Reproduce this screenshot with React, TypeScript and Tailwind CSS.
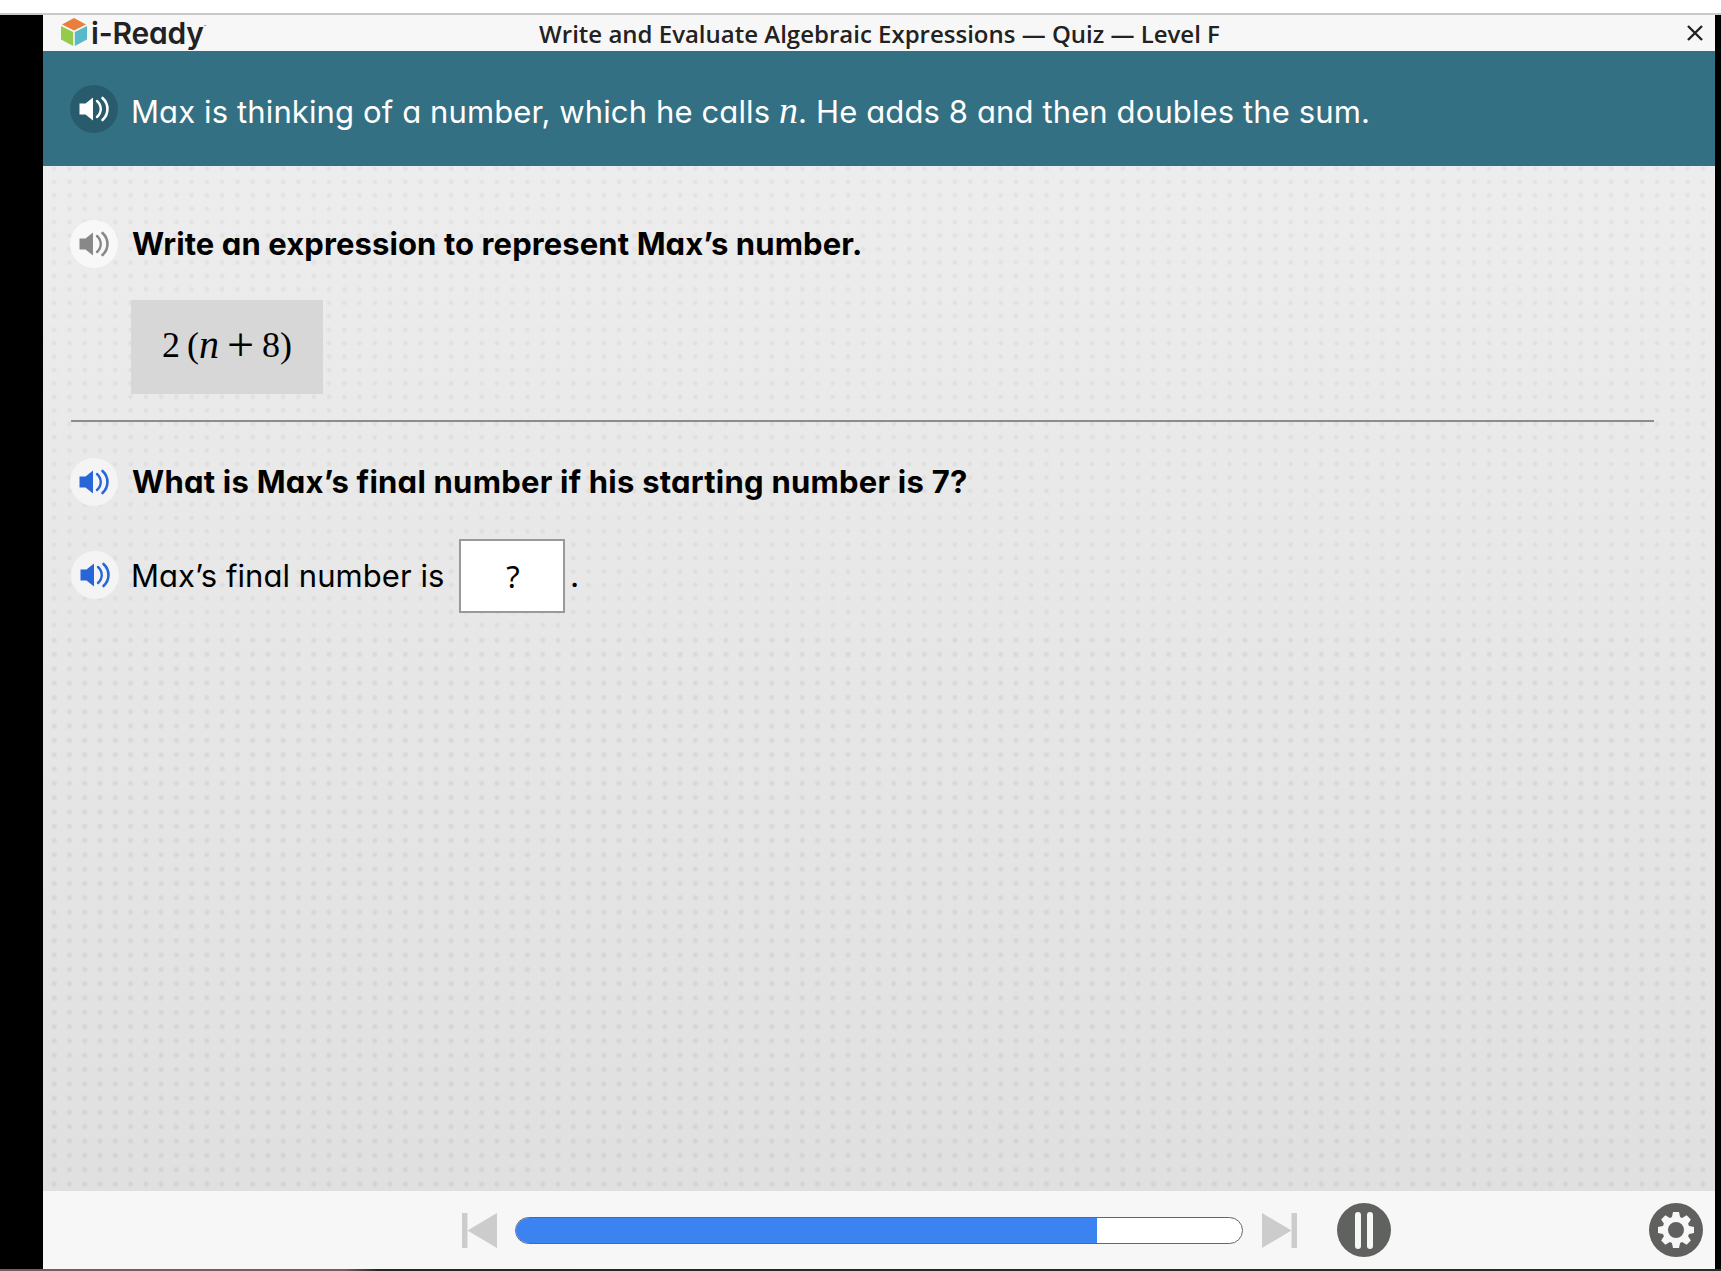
import React from "react"

const SpeakerIcon: React.FC<{ className?: string }> = ({ className }) => (
  <svg viewBox="-16 -13 32 26" className={`h-[26px] w-8 ${className}`} fill="none" strokeLinecap="round">
    <path d="M-14.500 -5.500H-8.500L-1 -11.500V11.500L-8.500 5.500H-14.500Z" fill="currentColor" />
    <path d="M3 -8c5 4.600 5 11.400 0 16" stroke="currentColor" strokeWidth="2.400" />
    <path d="M8.500 -11c6.600 6 6.600 16 0 22" stroke="currentColor" strokeWidth="2.600" />
  </svg>
)

const AudioButton: React.FC<{ className?: string }> = ({ className }) => (
  <button className={`flex size-12 shrink-0 items-center justify-center rounded-full ${className}`}>
    <SpeakerIcon className="shrink-0" />
  </button>
)

const Logo = () => (
  <div className="flex h-9 items-center">
    <svg viewBox="0 0 26 28" className="mb-[3px] h-7 w-[26px]">
      <path d="M13 0L25 6.500L13 12.500L1 6.500Z" fill="#e97e3d" />
      <path d="M0 8L12.200 14V28L0 21.500Z" fill="#95ca4d" />
      <path d="M26 8L13.800 14V28L26 21.500Z" fill="#58bac8" />
    </svg>
    <span className="mb-px ml-1 text-[30px] leading-9 font-semibold tracking-[-0.2px] text-[#222]">i-Ready</span>
    <span className="mb-3 text-[4px] text-[#222]">™</span>
  </div>
)

const SkipIcon: React.FC<{ className?: string }> = ({ className }) => (
  <svg viewBox="0 0 35 35" className={`size-[35px] ${className}`} fill="#ccc">
    <path d="M0 0h5.500v35H0z" />
    <path d="M5.500 17.500L35 0v35z" />
  </svg>
)

const GearIcon = () => (
  <svg viewBox="-18 -18 36 36" className="size-9" fill="#f7f7f7">
    {[0, 45, 90, 135, 180, 225, 270, 315].map((angle) => (
      <path key={angle} d="M-4.500 -11L-3 -18H3L4.500 -11Z" transform={`rotate(${angle})`} />
    ))}
    <circle r="10.800" fill="none" stroke="#f7f7f7" strokeWidth="5.600" />
  </svg>
)

const App = () => {
  return (
    <div className="flex h-[1271px] w-[1721px] flex-col overflow-hidden bg-black font-['Inter',sans-serif] [font-feature-settings:'cv11']">
      <div className="h-[15px] shrink-0 border-b-2 border-[#c9c9c9] bg-white" />
      <div className="mr-1.5 ml-[43px] flex h-[1254px] flex-col bg-[#f7f7f7]">
        <header className="grid h-9 shrink-0 grid-cols-[1fr_auto_1fr] items-center pr-3 pl-[18px]">
          <Logo />
          <h1 className="mt-0.5 mr-[5px] font-['Open_Sans',sans-serif] text-2xl font-semibold whitespace-nowrap text-[#222]">
            Write and Evaluate Algebraic Expressions — Quiz — Level F
          </h1>
          <button className="justify-self-end">
            <svg viewBox="0 0 16 16" className="size-4" stroke="#222" strokeWidth="2.400">
              <path d="M1 1L15 15M15 1L1 15" />
            </svg>
          </button>
        </header>
        <section className="flex h-[115px] shrink-0 items-center bg-[#337083] pl-[27px] text-white">
          <AudioButton className="bg-[#285c6c]" />
          <p className="mt-[7px] ml-[13px] text-[31px] tracking-[0.12px] whitespace-nowrap">
            Max is thinking of a number, which he calls{" "}
            <i className="font-['Liberation_Serif',serif] text-[38px] leading-8">n</i>. He adds 8 and then doubles the sum.
          </p>
        </section>
        <main className="flex h-[1025px] shrink-0 flex-col bg-linear-to-b from-[#ededed] to-[#e0e0e0]">
          <div className="h-[467px] shrink-0 bg-[radial-gradient(circle,#0000000b_1.500px,transparent_3px)] bg-[size:15.27px_13.440px] bg-[position:3.600px_-4.300px] pt-[54px] pl-[27px]">
            <div className="flex h-12 items-center">
              <AudioButton className="bg-[#f8f8f8] text-[#888]" />
              <h2 className="ml-[14px] text-[31px] font-bold tracking-[0.1px] whitespace-nowrap">
                Write an expression to represent Max’s number.
              </h2>
            </div>
            <div className="mt-8 ml-[61px] flex h-[94px] w-48 items-center justify-center bg-[#d7d7d7] pb-1 font-['Liberation_Serif',serif] text-[36px]">
              <span>2</span>
              <span className="ml-[7px]">(</span>
              <i className="text-[40px] leading-9">n</i>
              <span className="mx-2 text-[48px] leading-9">+</span>
              <span>8</span>
              <span>)</span>
            </div>
            <hr className="mt-[26px] ml-px w-[1583px] border-t-2 border-[#8c8c8c]" />
            <div className="mt-9 flex h-12 items-center">
              <AudioButton className="bg-[#f4f4f4] text-[#2866d8]" />
              <h2 className="ml-[14px] text-[31px] font-bold tracking-[0.23px] whitespace-nowrap">
                What is Max’s final number if his starting number is 7?
              </h2>
            </div>
            <div className="mt-[33px] flex h-[74px] items-center">
              <AudioButton className="mb-0.5 ml-px bg-[#f4f4f4] text-[#2866d8]" />
              <p className="ml-3 w-[328px] text-[31px] tracking-[0.05px] whitespace-nowrap">Max’s final number is</p>
              <div className="flex h-[74px] w-[106px] items-center justify-center border-2 border-[#999] bg-white pl-0.5 font-['Noto_Sans',sans-serif] text-[31px]">
                ?
              </div>
              <span className="ml-[5px] text-[32px]">.</span>
            </div>
          </div>
          <div className="flex-1 bg-[radial-gradient(circle,#0000000f_1.500px,transparent_3.400px)] bg-[size:15.27px_14.320px] bg-[position:3.600px_0px]" />
        </main>
        <footer className="flex h-[78px] shrink-0 items-center pl-[419px]">
          <SkipIcon />
          <div className="ml-[18px] h-[27px] w-[728px] overflow-hidden rounded-full border border-[#666] bg-white">
            <div className="h-full w-[581px] bg-[#3b83f1]" />
          </div>
          <SkipIcon className="ml-[19px] rotate-180" />
          <button className="ml-10 flex size-[54px] items-center justify-center gap-1.5 rounded-full bg-[#60625f]">
            <span className="h-[37px] w-1.5 rounded-full bg-[#f7f7f7]" />
            <span className="h-[37px] w-1.5 rounded-full bg-[#f7f7f7]" />
          </button>
          <button className="mr-3 ml-auto flex size-[54px] items-center justify-center rounded-full bg-[#60605f]">
            <GearIcon />
          </button>
        </footer>
      </div>
      <div className="h-0.5 shrink-0 bg-linear-to-r from-[#80595e] from-20% via-[#2a2520] via-22% to-[#302a27]" />
    </div>
  )
}

export default App
